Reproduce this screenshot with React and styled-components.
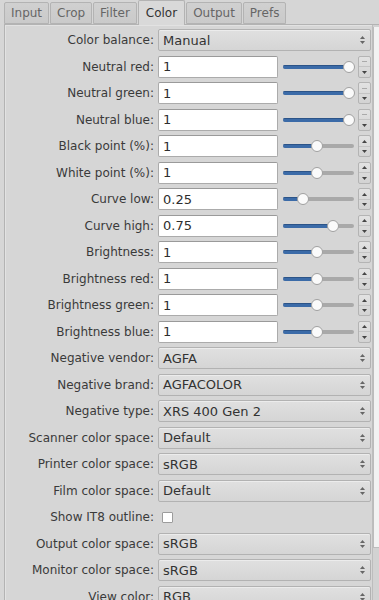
import React from "react";
import styled, { createGlobalStyle } from "styled-components";

const GlobalStyle = createGlobalStyle`
  html, body {
    margin: 0;
    padding: 0;
    background: #d6d6d6;
    overflow: hidden;
  }
  body {
    font-family: "DejaVu Sans", "Liberation Sans", sans-serif;
    font-size: 12px;
    color: #3a3a3a;
  }
`;

const Window = styled.div`
  width: 379px;
  height: 600px;
  display: flex;
  flex-direction: column;
  overflow: hidden;
  background: #d6d6d6;
`;

const TabBar = styled.div`
  display: flex;
  align-items: flex-end;
  height: 24px;
  padding-left: 4px;
  gap: 1px;
  position: relative;
  z-index: 1;
`;

const Tab = styled.div`
  height: ${(p) => (p.$active ? "25px" : "22px")};
  margin-bottom: ${(p) => (p.$active ? "-1px" : "0")};
  padding: 0 ${(p) => (p.$active ? "7px" : "6px")};
  box-sizing: border-box;
  display: flex;
  align-items: center;
  color: ${(p) => (p.$active ? "#333" : "#666")};
  background: ${(p) =>
    p.$active ? "#d9d9d9" : "linear-gradient(#d0d0d0, #cacaca)"};
  border: 1px solid #b3b3b3;
  border-bottom: ${(p) => (p.$active ? "none" : "1px solid #b3b3b3")};
  border-radius: 2px 2px 0 0;
  font-size: 12px;
`;

const Panel = styled.div`
  flex: 1;
  display: flex;
  margin-left: 4px;
  border-top: 1px solid #b3b3b3;
  border-left: 1px solid #b3b3b3;
  background: #d6d6d6;
  min-height: 0;
`;

const Content = styled.div`
  flex: 1;
  padding-top: 2px;
  border-right: 1px solid #bdbdbd;
  box-shadow: inset 1px 1px 0 #e2e2e2;
`;

const Scrollbar = styled.div`
  width: 6px;
  padding-top: 2px;
  background: #d2d2d2;
`;

const Thumb = styled.div`
  height: 521px;
  background: #f2f2f2;
  border-left: 1px solid #bcbcbc;
  border-bottom: 1px solid #bcbcbc;
  box-sizing: border-box;
`;

const Row = styled.div`
  display: grid;
  grid-template-columns: 149px 213px;
  column-gap: 4px;
  align-items: center;
  height: 26.5px;
`;

const Label = styled.div`
  text-align: right;
  white-space: nowrap;
`;

const Control = styled.div`
  display: flex;
  align-items: center;
  height: 22px;
`;

const TextField = styled.div`
  width: 120px;
  height: 22px;
  box-sizing: border-box;
  background: #fff;
  border: 1px solid #ababab;
  border-top-color: #9a9a9a;
  border-radius: 2px;
  padding-left: 4px;
  display: flex;
  align-items: center;
  font-size: 13px;
  color: #2e2e2e;
`;

const SliderWrap = styled.div`
  flex: 1;
  height: 22px;
  position: relative;
  margin: 0 3px 0 4px;
`;

const Track = styled.div`
  position: absolute;
  left: 1px;
  right: 1px;
  top: 9px;
  height: 4px;
  border-radius: 2px;
  background: #a9a9a9;
  overflow: hidden;
`;

const Fill = styled.div`
  height: 100%;
  background: #3b6ba8;
  border-top: 1px solid #2c5488;
  box-sizing: border-box;
`;

const Handle = styled.div`
  position: absolute;
  top: 5px;
  width: 12px;
  height: 12px;
  margin-left: -6px;
  border-radius: 50%;
  background: #fafafa;
  border: 1px solid #a0a0a0;
  box-sizing: border-box;
`;

const Spin = styled.div`
  width: 13px;
  height: 22px;
  box-sizing: border-box;
  border: 1px solid #b4b4b4;
  border-radius: 2px;
  background: linear-gradient(#e2e2e2, #d3d3d3);
  display: flex;
  flex-direction: column;
`;

const SpinHalf = styled.div`
  flex: 1;
  display: flex;
  align-items: center;
  justify-content: center;
  & + & {
    border-top: 1px solid #c4c4c4;
  }
`;

const Combo = styled.div`
  width: 213px;
  height: 22px;
  box-sizing: border-box;
  border: 1px solid #b2b2b2;
  border-radius: 2px;
  background: linear-gradient(#e0e0e0, #d5d5d5);
  box-shadow: inset 0 1px 0 #ececec;
  display: flex;
  align-items: center;
  justify-content: space-between;
  padding: 0 5px 0 4px;
  font-size: 13px;
  color: #333;
`;

const CheckBox = styled.div`
  width: 9px;
  height: 9px;
  margin-left: 4px;
  background: #fff;
  border: 1px solid #9c9c9c;
  border-radius: 1px;
`;

const Arrow = ({ up, color = "#555" }) => (
  <svg width="5" height="3" viewBox="0 0 5 3">
    <polygon points={up ? "0,3 2.5,0 5,3" : "0,0 5,0 2.5,3"} fill={color} />
  </svg>
);

const ComboArrows = styled.div`
  display: flex;
  flex-direction: column;
  gap: 2px;
`;

const ComboField = ({ value }) => (
  <Combo>
    <span>{value}</span>
    <ComboArrows>
      <Arrow up color="#666" />
      <Arrow color="#666" />
    </ComboArrows>
  </Combo>
);

const SliderField = ({ value, pct }) => {
  const atMax = pct >= 90;
  return (
    <Control>
      <TextField>{value}</TextField>
      <SliderWrap>
        <Track>
          <Fill style={{ width: `${pct}%` }} />
        </Track>
        <Handle style={{ left: `${pct}%` }} />
      </SliderWrap>
      <Spin>
        <SpinHalf>
          {atMax ? (
            <svg width="5" height="1">
              <rect width="5" height="1" fill="#aaa" />
            </svg>
          ) : (
            <Arrow up color="#444" />
          )}
        </SpinHalf>
        <SpinHalf>
          <Arrow color="#444" />
        </SpinHalf>
      </Spin>
    </Control>
  );
};

const rows = [
  { label: "Color balance:", combo: "Manual" },
  { label: "Neutral red:", slider: "1", pct: 92 },
  { label: "Neutral green:", slider: "1", pct: 92 },
  { label: "Neutral blue:", slider: "1", pct: 92 },
  { label: "Black point (%):", slider: "1", pct: 48 },
  { label: "White point (%):", slider: "1", pct: 48 },
  { label: "Curve low:", slider: "0.25", pct: 29 },
  { label: "Curve high:", slider: "0.75", pct: 70 },
  { label: "Brightness:", slider: "1", pct: 48 },
  { label: "Brightness red:", slider: "1", pct: 48 },
  { label: "Brightness green:", slider: "1", pct: 48 },
  { label: "Brightness blue:", slider: "1", pct: 48 },
  { label: "Negative vendor:", combo: "AGFA" },
  { label: "Negative brand:", combo: "AGFACOLOR" },
  { label: "Negative type:", combo: "XRS 400 Gen 2" },
  { label: "Scanner color space:", combo: "Default" },
  { label: "Printer color space:", combo: "sRGB" },
  { label: "Film color space:", combo: "Default" },
  { label: "Show IT8 outline:", check: true },
  { label: "Output color space:", combo: "sRGB" },
  { label: "Monitor color space:", combo: "sRGB" },
  { label: "View color:", combo: "RGB" },
];

const tabs = ["Input", "Crop", "Filter", "Color", "Output", "Prefs"];

export default function App() {
  return (
    <Window>
      <GlobalStyle />
      <TabBar>
        {tabs.map((t) => (
          <Tab key={t} $active={t === "Color"}>
            {t}
          </Tab>
        ))}
      </TabBar>
      <Panel>
        <Content>
          {rows.map((r) => (
            <Row key={r.label}>
              <Label>{r.label}</Label>
              {r.combo && (
                <Control>
                  <ComboField value={r.combo} />
                </Control>
              )}
              {r.slider && <SliderField value={r.slider} pct={r.pct} />}
              {r.check && (
                <Control>
                  <CheckBox />
                </Control>
              )}
            </Row>
          ))}
        </Content>
        <Scrollbar>
          <Thumb />
        </Scrollbar>
      </Panel>
    </Window>
  );
}
